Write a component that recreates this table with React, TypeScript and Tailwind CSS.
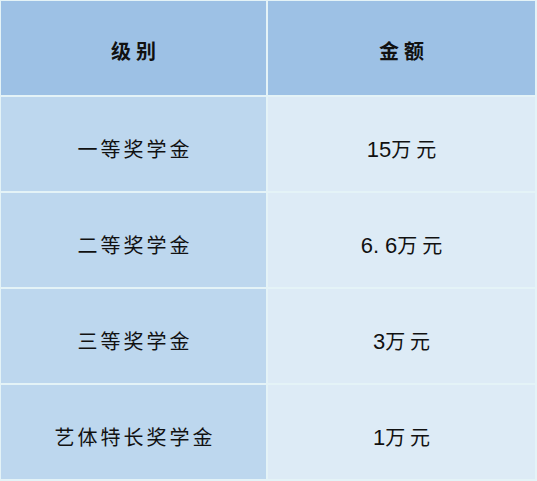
const rows = [
  { level: '一等奖学金', num: '15', unit: '万元' },
  { level: '二等奖学金', num: '6.6', unit: '万元' },
  { level: '三等奖学金', num: '3', unit: '万元' },
  { level: '艺体特长奖学金', num: '1', unit: '万元' },
];

const cjk = '"Noto Sans CJK SC", "Noto Sans", sans-serif';

function Amount({ num, unit }: { num: string; unit: string }) {
  const parts = num.split('.');
  return (
    <span className="flex items-baseline">
      <span className="text-[22px]" style={{ fontFamily: '"Liberation Sans", Arial, sans-serif' }}>
        {parts[0]}
        {parts.length > 1 && <span className="mr-[6px]">.</span>}
        {parts[1]}
      </span>
      <span className="text-[20px] tracking-[5px] -mr-[5px]" style={{ fontFamily: cjk }}>
        {unit}
      </span>
    </span>
  );
}

export default function App() {
  return (
    <div className="w-[537px] h-[481px] bg-[#e4f3f7] pt-[1px] pl-[1px] pr-[2px] pb-[2px]">
      <div className="grid h-full grid-cols-[265px_1fr] grid-rows-5 gap-[2px] text-[#111111]">
        <div className="flex items-center justify-center bg-[#9dc1e5] pt-[6px]">
          <span className="text-[20px] font-bold tracking-[5px] -mr-[5px]" style={{ fontFamily: cjk }}>
            级别
          </span>
        </div>
        <div className="flex items-center justify-center bg-[#9dc1e5] pt-[6px]">
          <span className="text-[20px] font-bold tracking-[5px] -mr-[5px]" style={{ fontFamily: cjk }}>
            金额
          </span>
        </div>
        {rows.map((r) => (
          <div key={r.level} className="contents">
            <div className="flex items-center justify-center bg-[#bdd7ee] pt-[10px]">
              <span className="text-[20px] tracking-[3px] -mr-[3px]" style={{ fontFamily: cjk }}>
                {r.level}
              </span>
            </div>
            <div className="flex items-center justify-center bg-[#ddebf6] pt-[10px]">
              <Amount num={r.num} unit={r.unit} />
            </div>
          </div>
        ))}
      </div>
    </div>
  );
}
